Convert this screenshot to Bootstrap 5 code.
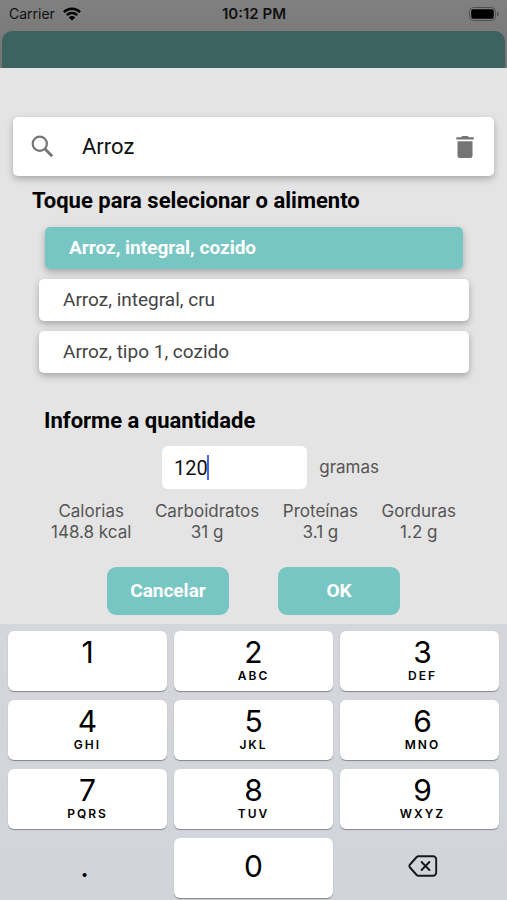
<!DOCTYPE html>
<html lang="pt-BR">
<head>
<meta charset="utf-8">
<meta name="viewport" content="width=device-width, initial-scale=1">
<title>Selecionar alimento</title>
<link rel="stylesheet" href="https://cdn.jsdelivr.net/npm/bootstrap@5.3.0/dist/css/bootstrap.min.css">
<style>
  body { font-family: Roboto, "Liberation Sans", sans-serif; background: #e4e4e4; color: #000; }
  .backdrop-area { background: linear-gradient(#808080, #747474); padding: 0 2px; }
  .status-row { height: 31px; padding: 0 6px 3px 7px; font-family: Inter, "Liberation Sans", sans-serif; font-size: 14px; line-height: 20px; color: #111; }
  .status-time { font-size: 15px; font-weight: 600; }
  .under-bar { height: 37px; background: #3d6361; border-radius: 10px 10px 0 0; }
  .sheet { padding-top: 49px; }
  .search-box { margin: 0 13px; height: 59px; padding: 0 17px; background: #fff; border-radius: 5px; box-shadow: 0 3px 7px rgba(0,0,0,.26); }
  .search-box input { margin-left: 28px; font-size: 22px; line-height: 30px; color: #111; }
  .bare-input { border: 0; padding: 0; background: transparent; outline: 0; min-width: 0; }
  .step-title { font-size: 22px; line-height: 28px; font-weight: 700; margin: 0; }
  .title-pick { padding: 11px 32px 0; }
  .title-amount { padding: 34px 44px 0; }
  .foods { padding: 12px 38px 0 39px; gap: 10px; }
  .food { border: 0; border-radius: 5px; background: #fff; color: #444; font-size: 19px; line-height: 27px; padding: 7px 24px 8px; text-align: left; box-shadow: 0 3px 7px rgba(0,0,0,.28); }
  .food.chosen { margin: 0 6px; background: #78c6c3; color: #fff; font-weight: 700; }
  .amount-row { padding: 11px 128px 0 162px; gap: 12px; color: #555; }
  .amount-field { flex: 1 1 0; height: 43px; padding: 0 12px; background: #fff; border-radius: 6px; }
  .amount-field input { width: 33px; font-size: 20px; color: #111; }
  .caret { width: 2px; height: 25px; background: #416be0; }
  .unit, .facts { font-family: Inter, "Liberation Sans", sans-serif; font-size: 17px; line-height: 21px; color: #555; }
  .facts { padding: 12px 51px 0; }
  .facts dt, .facts dd { font-weight: 400; margin: 0; }
  .actions { padding: 24px 107px 9px; gap: 49px; }
  .act { flex: 1 1 0; border: 0; border-radius: 9px; height: 48px; background: #78c6c3; color: #fff; font-size: 19px; line-height: 24px; font-weight: 700; }
  .keypad { display: grid; grid-template-columns: repeat(3, 1fr); gap: 9px 7px; padding: 7px 8px 8px; background: linear-gradient(#d5d6dc, #d1d5da); font-family: Inter, "Liberation Sans", sans-serif; }
  .pad-key { border: 0; height: 60px; border-radius: 6px; background: #fff; color: #000; box-shadow: 0 1px 1px #85868a; font-size: 30px; line-height: 30px; padding: 6px 0 0; }
  .pad-key small { font-size: 12px; line-height: 18px; font-weight: 600; letter-spacing: 2px; }
  .pad-key.single { padding: 0 0 4px; }
  .pad-key.flat { background: transparent; box-shadow: none; padding: 0 6px 4px 0; }
  .keypad .pad-key:nth-child(3n) { padding-left: 6px; padding-right: 0; }
</style>
<script src="https://cdn.jsdelivr.net/npm/bootstrap@5.3.0/dist/js/bootstrap.bundle.min.js"></script>
</head>
<body>
<header class="backdrop-area">
  <div class="status-row row g-0 align-items-center">
    <div class="col d-flex align-items-center gap-2">
      <span>Carrier</span>
      <svg width="18" height="14" viewBox="0 0 18 14" aria-hidden="true"><g fill="none" stroke="#000" stroke-width="2.4"><path d="M.9 5.1a11.6 11.6 0 0 1 16.2 0"/><path d="M3.8 8.2a7.4 7.4 0 0 1 10.4 0"/></g><path d="M9 13.6 5.8 10.4a4.6 4.6 0 0 1 6.4 0z"/></svg>
    </div>
    <div class="col-auto status-time">10:12 PM</div>
    <div class="col d-flex justify-content-end">
      <svg width="30" height="14" viewBox="0 0 30 14" aria-hidden="true"><rect x=".5" y=".5" width="26" height="13" rx="4" fill="none" stroke="#505050"/><rect x="2.2" y="2.2" width="22.6" height="9.6" rx="2"/><path d="M28 4.5c2.3 1.2 2.3 3.8 0 5z" fill="#505050"/></svg>
    </div>
  </div>
  <div class="under-bar"></div>
</header>
<main class="sheet">
  <div class="search-box d-flex align-items-center">
    <svg width="24" height="24" viewBox="0 0 24 24" aria-hidden="true"><g fill="none" stroke="#757575"><circle cx="9.8" cy="8.7" r="7.1" stroke-width="2.2"/><path d="M14.8 13.800l7.400 7.400" stroke-width="3"/></g></svg>
    <input class="bare-input flex-grow-1" type="text" value="Arroz" aria-label="Buscar alimento">
    <button class="btn p-0 border-0 d-flex" type="button" aria-label="Limpar busca">
      <svg width="24" height="24" viewBox="0 0 24 24" fill="#757575"><path d="M4.500 6.200h15v14.600a2.300 2.300 0 0 1-2.300 2.300H6.800a2.300 2.300 0 0 1-2.300-2.300zM3.300 2.200H8l1.300-1.300h5.400L16 2.200h4.700v2.400H3.300z"/></svg>
    </button>
  </div>
  <h2 class="step-title title-pick">Toque para selecionar o alimento</h2>
  <div class="foods d-flex flex-column">
    <button class="food chosen" type="button" aria-pressed="true">Arroz, integral, cozido</button>
    <button class="food" type="button">Arroz, integral, cru</button>
    <button class="food" type="button">Arroz, tipo 1, cozido</button>
  </div>
  <h2 class="step-title title-amount"><label for="amount">Informe a quantidade</label></h2>
  <div class="amount-row d-flex align-items-center">
    <div class="amount-field d-flex align-items-center">
      <input class="bare-input" id="amount" type="text" inputmode="decimal" value="120"><span class="caret"></span>
    </div>
    <span class="unit">gramas</span>
  </div>
  <dl class="facts d-flex justify-content-between text-center m-0">
    <div><dt>Calorias</dt><dd>148.8 kcal</dd></div>
    <div><dt>Carboidratos</dt><dd>31 g</dd></div>
    <div><dt>Proteínas</dt><dd>3.1 g</dd></div>
    <div><dt>Gorduras</dt><dd>1.2 g</dd></div>
  </dl>
  <div class="actions d-flex">
    <button class="act" type="button">Cancelar</button>
    <button class="act" type="button">OK</button>
  </div>
</main>
<div class="keypad">
  <button class="pad-key d-flex flex-column align-items-center" type="button">1</button>
  <button class="pad-key d-flex flex-column align-items-center" type="button">2<small>ABC</small></button>
  <button class="pad-key d-flex flex-column align-items-center" type="button">3<small>DEF</small></button>
  <button class="pad-key d-flex flex-column align-items-center" type="button">4<small>GHI</small></button>
  <button class="pad-key d-flex flex-column align-items-center" type="button">5<small>JKL</small></button>
  <button class="pad-key d-flex flex-column align-items-center" type="button">6<small>MNO</small></button>
  <button class="pad-key d-flex flex-column align-items-center" type="button">7<small>PQRS</small></button>
  <button class="pad-key d-flex flex-column align-items-center" type="button">8<small>TUV</small></button>
  <button class="pad-key d-flex flex-column align-items-center" type="button">9<small>WXYZ</small></button>
  <button class="pad-key flat" type="button">.</button>
  <button class="pad-key single" type="button">0</button>
  <button class="pad-key flat d-flex align-items-center justify-content-center" type="button" aria-label="Apagar">
    <svg width="30" height="22" viewBox="0 0 30 22" fill="none" stroke="#15181c" stroke-width="1.9" stroke-linecap="round" stroke-linejoin="round"><path d="M10.6 1.2H25a3.2 3.2 0 0 1 3.2 3.2v13.2a3.2 3.2 0 0 1-3.2 3.2H10.6a2.6 2.6 0 0 1-1.9-.8L2 12.5a2.1 2.1 0 0 1 0-3L8.700 2a2.600 2.600 0 0 1 1.900-.8z"/><path d="M13.600 7l7.800 8M21.400 7l-7.800 8"/></svg>
  </button>
</div>
</body>
</html>
